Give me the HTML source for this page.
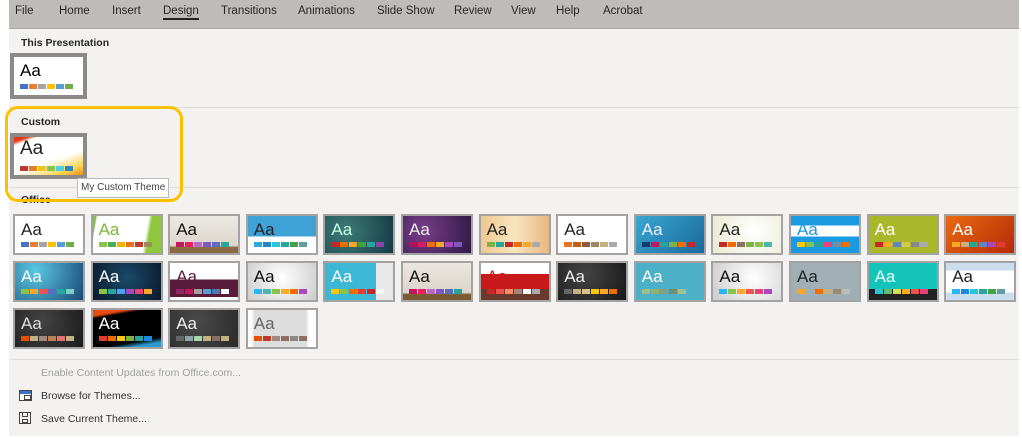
<!DOCTYPE html>
<html><head><meta charset="utf-8"><style>
*{margin:0;padding:0;box-sizing:border-box}
body{width:1022px;height:438px;background:#fff;position:relative;overflow:hidden;font-family:"Liberation Sans",sans-serif}
.rib{position:absolute;left:9px;top:0;width:1010px;height:29px;background:#bfbbb8;border-bottom:1px solid #a9a6a3}
.rib span{position:absolute;top:5px;font-size:11.5px;color:#262626}
.panel{position:absolute;left:9px;top:29px;width:1010px;height:407px;background:#f3f2f1}
.lbl{position:absolute;font-size:10.5px;font-weight:bold;color:#262626}
.sep{position:absolute;left:9px;width:1010px;height:1px;background:#dedddb}
.t{position:absolute;width:72px;height:41px;border:2px solid #a3a3a3;overflow:hidden}
.t b{position:absolute;left:6px;top:4px;font-weight:normal;font-size:17px;font-family:"Liberation Sans",sans-serif}
.t i{position:absolute;left:6px;bottom:6px;display:flex;gap:1px}
.t i u{display:block;width:8px;height:5px}
.sel{border:4px solid #8a8a8a}
.menu{position:absolute;font-size:10.5px;color:#333}
</style></head><body>
<div class="rib">
<span style="left:6px">File</span><span style="left:50px">Home</span><span style="left:103px">Insert</span>
<span style="left:154px;border-bottom:2px solid #222;padding-bottom:1px">Design</span>
<span style="left:212px">Transitions</span><span style="left:289px">Animations</span><span style="left:368px">Slide Show</span>
<span style="left:445px">Review</span><span style="left:502px">View</span><span style="left:547px">Help</span><span style="left:594px">Acrobat</span>
</div>
<div class="panel"></div>
<div class="lbl" style="left:21px;top:37px">This Presentation</div>
<div class="t sel" style="left:10px;top:53px;width:77px;height:46px;background:#fff"><b>Aa</b><i><u style="background:#4472c4"></u><u style="background:#ed7d31"></u><u style="background:#a5a5a5"></u><u style="background:#ffc000"></u><u style="background:#5b9bd5"></u><u style="background:#70ad47"></u></i></div>
<div class="sep" style="top:107px"></div>
<div class="lbl" style="left:21px;top:116px">Custom</div>
<div class="t sel" style="left:10px;top:133px;width:77px;height:46px;background:linear-gradient(160deg,#e53a1a 0 8%,#fff 14% 60%,#ffd24a 85%,#e98a1a)"><b style="font-size:19px;color:#222;top:1px">Aa</b><i style="bottom:4px"><u style="background:#c0392b"></u><u style="background:#e67e22"></u><u style="background:#f1c40f"></u><u style="background:#8bc34a"></u><u style="background:#4dd0e1"></u><u style="background:#2e86c1"></u></i></div>
<div class="sep" style="top:187px"></div>
<div class="lbl" style="left:21px;top:194px">Office</div>
<div style="position:absolute;left:5px;top:106px;width:178px;height:96px;border:3px solid #ffc000;border-radius:13px"></div>
<div style="position:absolute;left:77px;top:178px;width:92px;height:20px;background:#fff;border:1px solid #bbb;font-size:10px;color:#444;padding:3px 0 0 3px">My Custom Theme</div>
<div id="g"></div>
<div class="sep" style="top:359px"></div>
<div class="menu" style="left:41px;top:367px;color:#a0a0a0">Enable Content Updates from Office.com...</div>
<div style="position:absolute;left:19px;top:390px;width:13px;height:11px;border:1px solid #444;background:#fff"><div style="height:3px;background:#3a6fc4"></div><div style="position:absolute;left:4px;top:4px;width:7px;height:5px;border:1px solid #444"></div></div>
<div class="menu" style="left:41px;top:390px">Browse for Themes...</div>
<div style="position:absolute;left:19px;top:412px;width:12px;height:12px;border:1px solid #444"><div style="position:absolute;left:2px;top:0;width:6px;height:4px;border:1px solid #444;border-top:none"></div><div style="position:absolute;left:2px;top:6px;width:6px;height:4px;border:1px solid #444"></div></div>
<div class="menu" style="left:41px;top:413px">Save Current Theme...</div>
<script>
var T=[
["#fff","#222",["#4472c4","#ed7d31","#a5a5a5","#ffc000","#5b9bd5","#70ad47"]],
["linear-gradient(100deg,#7fc241 0 4%,#fff 6% 75%,#8fc83e 80%)","#7ab83a",["#8bc34a","#4caf50","#f4b400","#e8711c","#c0392b","#9e8a5a"]],
["linear-gradient(#ece9e4,#ddd6cd 80%,#8a6a40 85%)","#111",["#c2185b","#e91e63","#ba68c8","#7e57c2","#5c6bc0","#26a69a"]],
["linear-gradient(#3fa2d6 0 55%,#fff 55%)","#222",["#29abe2","#1e88c8","#26c6da","#26a69a","#43a047","#5f9ea0"]],
["radial-gradient(circle at 30% 40%,#3d7c7a,#163a44)","#cfd",["#c62828","#ef6c00","#f9a825","#43a047","#26a69a","#8e44ad"]],
["radial-gradient(circle at 30% 40%,#7a3d8a,#2d1a44)","#eee",["#ad1457","#d81b60","#ef6c00","#f9a825","#ab47bc","#7e57c2"]],
["linear-gradient(90deg,#f0c890,#f8e4c0 50%,#e8b880)","#222",["#7cb342","#26a69a","#c62828","#ef6c00","#f9a825","#aaa"]],
["#fff","#222",["#e8711c","#c75b1a","#8d5a3a","#9e8a6a","#c2b280","#aaa"]],
["linear-gradient(135deg,#3aa6d4,#1a6a9a)","#eef",["#1a3a6a","#c2185b","#26a69a","#7cb342","#ef6c00","#c62828"]],
["radial-gradient(circle at 60% 40%,#fff,#e8ead0)","#222",["#c62828","#ef6c00","#8d6e63","#7cb342","#8bc34a","#4db6ac"]],
["linear-gradient(#1a9ae0 0 25%,#fff 25% 55%,#1a9ae0 55%)","#1a9ae0",["#f9c80e","#8bc34a","#26a69a","#ec407a","#78909c","#ef6c00"]],
["#a8b82a","#fff",["#c62828","#f9a825","#5c85c4","#d4c84a","#888","#aaa"]],
["linear-gradient(135deg,#e86a10,#b82a0a)","#fff",["#f9a825","#c2b280","#26a69a","#5c85c4","#ab47bc","#e53935"]],
["radial-gradient(circle at 30% 20%,#5ac8e0,#1a4a78)","#fff",["#8bc34a","#f9a825","#ef5350","#5c6bc0","#26a69a","#80cbc4"]],
["radial-gradient(circle at 50% 40%,#1a4a6a,#0a1a2a)","#fff",["#8bc34a","#26a69a","#42a5f5","#ab47bc","#ec407a","#ffa726"]],
["linear-gradient(#fff 0 45%,#5a1a3a 45% 92%,#fff 92%)","#5a1a3a",["#8e2a6a","#c2185b","#a0a0a0","#5c9bd5","#4a7ab0","#fff"]],
["radial-gradient(circle at 50% 40%,#fff,#ccc)","#111",["#29b6f6","#4db6ac","#8bc34a","#ffa726","#ef6c00","#ab47bc"]],
["linear-gradient(90deg,#3cb8d4 0 75%,#e8e8e8 75%)","#fff",["#f9c80e","#8bc34a","#ef6c00","#e53935","#c62828","#fff"]],
["linear-gradient(#ebe6e0,#ddd5cc 80%,#7a5a30 85%)","#111",["#c2185b","#e91e63","#ba68c8","#7e57c2","#5c6bc0","#26a69a"]],
["linear-gradient(#fff 0 30%,#c81a1a 30% 70%,#6a3a2a 70%)","#c81a1a",["#c62828","#ef5350","#ff8a65","#a1887f","#fff","#aaa"]],
["radial-gradient(circle at 40% 30%,#444,#181818)","#eee",["#666","#c2b280","#e0c080","#f9c80e","#ffa726","#ef6c00"]],
["#4cb0c8","#fff",["#a0c080","#90b070","#80a080","#709070","#a0c090","#4cb0c8"]],
["radial-gradient(circle at 60% 40%,#fff,#ccc)","#111",["#29b6f6","#8bc34a","#ffa726","#ef5350","#ec407a","#ab47bc"]],
["#a0afb5","#222",["#ffa726","#a0afb5","#ef6c00","#c2b280","#9e8a6a","#bbb"]],
["linear-gradient(#14c4b8 0 70%,#222 70%)","#eff",["#26c6da","#66bb6a","#d4e157","#ffa726","#ef5350","#ec407a"]],
["linear-gradient(#cde 0 20%,#fff 20% 80%,#cde 80%)","#222",["#29b6f6","#1e88e5","#26c6da","#26a69a","#43a047","#5f9ea0"]],
["radial-gradient(circle at 40% 30%,#444,#1a1a1a)","#ddd",["#e65100","#c2b280","#a1887f","#c08050","#e57373","#c2b280"]],
["linear-gradient(170deg,#e84a10 0 12%,#000 18% 80%,#2a9ad0 90%)","#fff",["#e53935","#ef6c00","#f9c80e","#7cb342","#26a69a","#1e88e5"]],
["radial-gradient(circle at 40% 30%,#4a4a4a,#2a2a2a)","#eee",["#666","#90a4ae","#a5d6a7","#c2b280","#8d6e63","#c2b280"]],
["linear-gradient(90deg,#fff 0 5%,#ddd 10% 85%,#fff 90%)","#666",["#e65100","#c0392b","#a1887f","#8d6e63","#888","#8d6e63"]]
];
var h="";T.forEach(function(d,k){var r=Math.floor(k/13),c=k%13;var x=13+c*77.6,y=[214,261,308][r];
h+='<div class="t" style="left:'+x+'px;top:'+y+'px;background:'+d[0]+'"><b style="color:'+d[1]+'">Aa</b><i>'+d[2].map(function(s){return '<u style="background:'+s+'"></u>'}).join('')+'</i></div>';});
document.getElementById('g').innerHTML=h;
</script>
</body></html>
